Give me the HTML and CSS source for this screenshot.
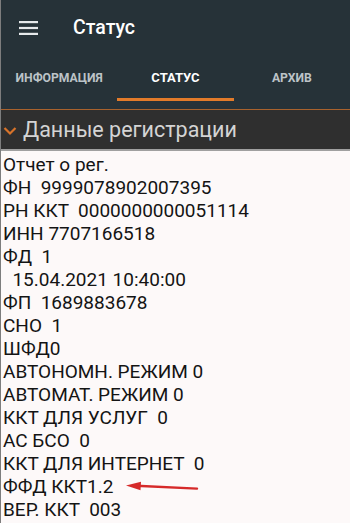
FILE: index.html
```html
<!DOCTYPE html>
<html lang="ru">
<head>
<meta charset="utf-8">
<link rel="stylesheet" href="styles.css">
</head>
<body>
<div class="app">
  <header class="toolbar">
    <svg class="menu" width="19" height="14" viewBox="0 0 19 14"><rect x="0" y="0" width="19" height="2.2" fill="#e6e9eb"/><rect x="0" y="5.9" width="19" height="2.2" fill="#e6e9eb"/><rect x="0" y="11.8" width="19" height="2.2" fill="#e6e9eb"/></svg>
    <h1 class="title">Статус</h1>
  </header>
  <nav class="tabs">
    <div class="tab">ИНФОРМАЦИЯ</div>
    <div class="tab active">СТАТУС</div>
    <div class="tab">АРХИВ</div>
  </nav>
  <div class="section">
    <svg class="chev" width="14" height="10" viewBox="0 0 14 10"><polyline points="1.5,2 7,7.5 12.5,2" fill="none" stroke="#d8732a" stroke-width="2.2"/></svg>
    <span class="section-title">Данные регистрации</span>
  </div>
  <div class="content">
<div class="line">Отчет о рег.</div>
<div class="line">ФН  9999078902007395</div>
<div class="line">РН ККТ  0000000000051114</div>
<div class="line">ИНН 7707166518</div>
<div class="line">ФД  1</div>
<div class="line">  15.04.2021 10:40:00</div>
<div class="line">ФП  1689883678</div>
<div class="line">СНО  1</div>
<div class="line">ШФД0</div>
<div class="line">АВТОНОМН. РЕЖИМ 0</div>
<div class="line">АВТОМАТ. РЕЖИМ 0</div>
<div class="line">ККТ ДЛЯ УСЛУГ  0</div>
<div class="line">АС БСО  0</div>
<div class="line">ККТ ДЛЯ ИНТЕРНЕТ  0</div>
<div class="line marked">ФФД ККТ1.2<svg class="arrow" width="73" height="12" viewBox="0 0 73 12"><line x1="10" y1="4.8" x2="71" y2="7.6" stroke="#d62a2a" stroke-width="2.4" stroke-linecap="round"/><polygon points="0,4.5 15,0.8 14.5,9.2" fill="#d62a2a"/></svg></div>
<div class="line">ВЕР. ККТ  003</div>
  </div>
</div>
</body>
</html>
```
FILE: styles.css
```css
html, body {
  margin: 0;
  padding: 0;
  background: #fdf9f9;
}
.app {
  width: 349px;
  height: 523px;
  overflow: hidden;
  border-left: 1px solid #7d7d7d;
  font-family: Roboto, "Noto Sans", sans-serif;
  background: #fdf9f9;
}
.toolbar {
  height: 56px;
  background: #263238;
  display: flex;
  align-items: center;
}
.menu {
  margin-left: 18px;
}
.title {
  margin: 0 0 2px 35px;
  font-size: 19.5px;
  font-weight: 500;
  color: #ffffff;
}
.tabs {
  display: flex;
  background: #263238;
  padding-bottom: 8px;
  border-bottom: 1.5px solid #a8622d;
}
.tab {
  flex: 1;
  height: 45px;
  display: flex;
  align-items: center;
  justify-content: center;
  padding-top: 1px;
  box-sizing: border-box;
  font-size: 12.2px;
  font-weight: 700;
  color: #bcc3c7;
  border-bottom: 3px solid transparent;
}
.tab.active {
  color: #ffffff;
  font-size: 13px;
  border-bottom-color: #e27b2a;
}
.section {
  height: 39px;
  background: #2f2f2f;
  border-bottom: 2px solid #a0a0a0;
  display: flex;
  align-items: center;
}
.chev {
  margin-left: 2px;
  margin-top: 2px;
}
.section-title {
  margin-left: 6px;
  font-size: 21.5px;
  color: #d4d4d4;
}
.content {
  padding: 2px 0 0 2px;
  color: #141414;
  font-size: 19px;
}
.line {
  white-space: pre;
  line-height: 23px;
  height: 23px;
}
.marked {
  display: flex;
  align-items: center;
}
.arrow {
  margin-left: 13px;
  margin-top: 0;
}
```
